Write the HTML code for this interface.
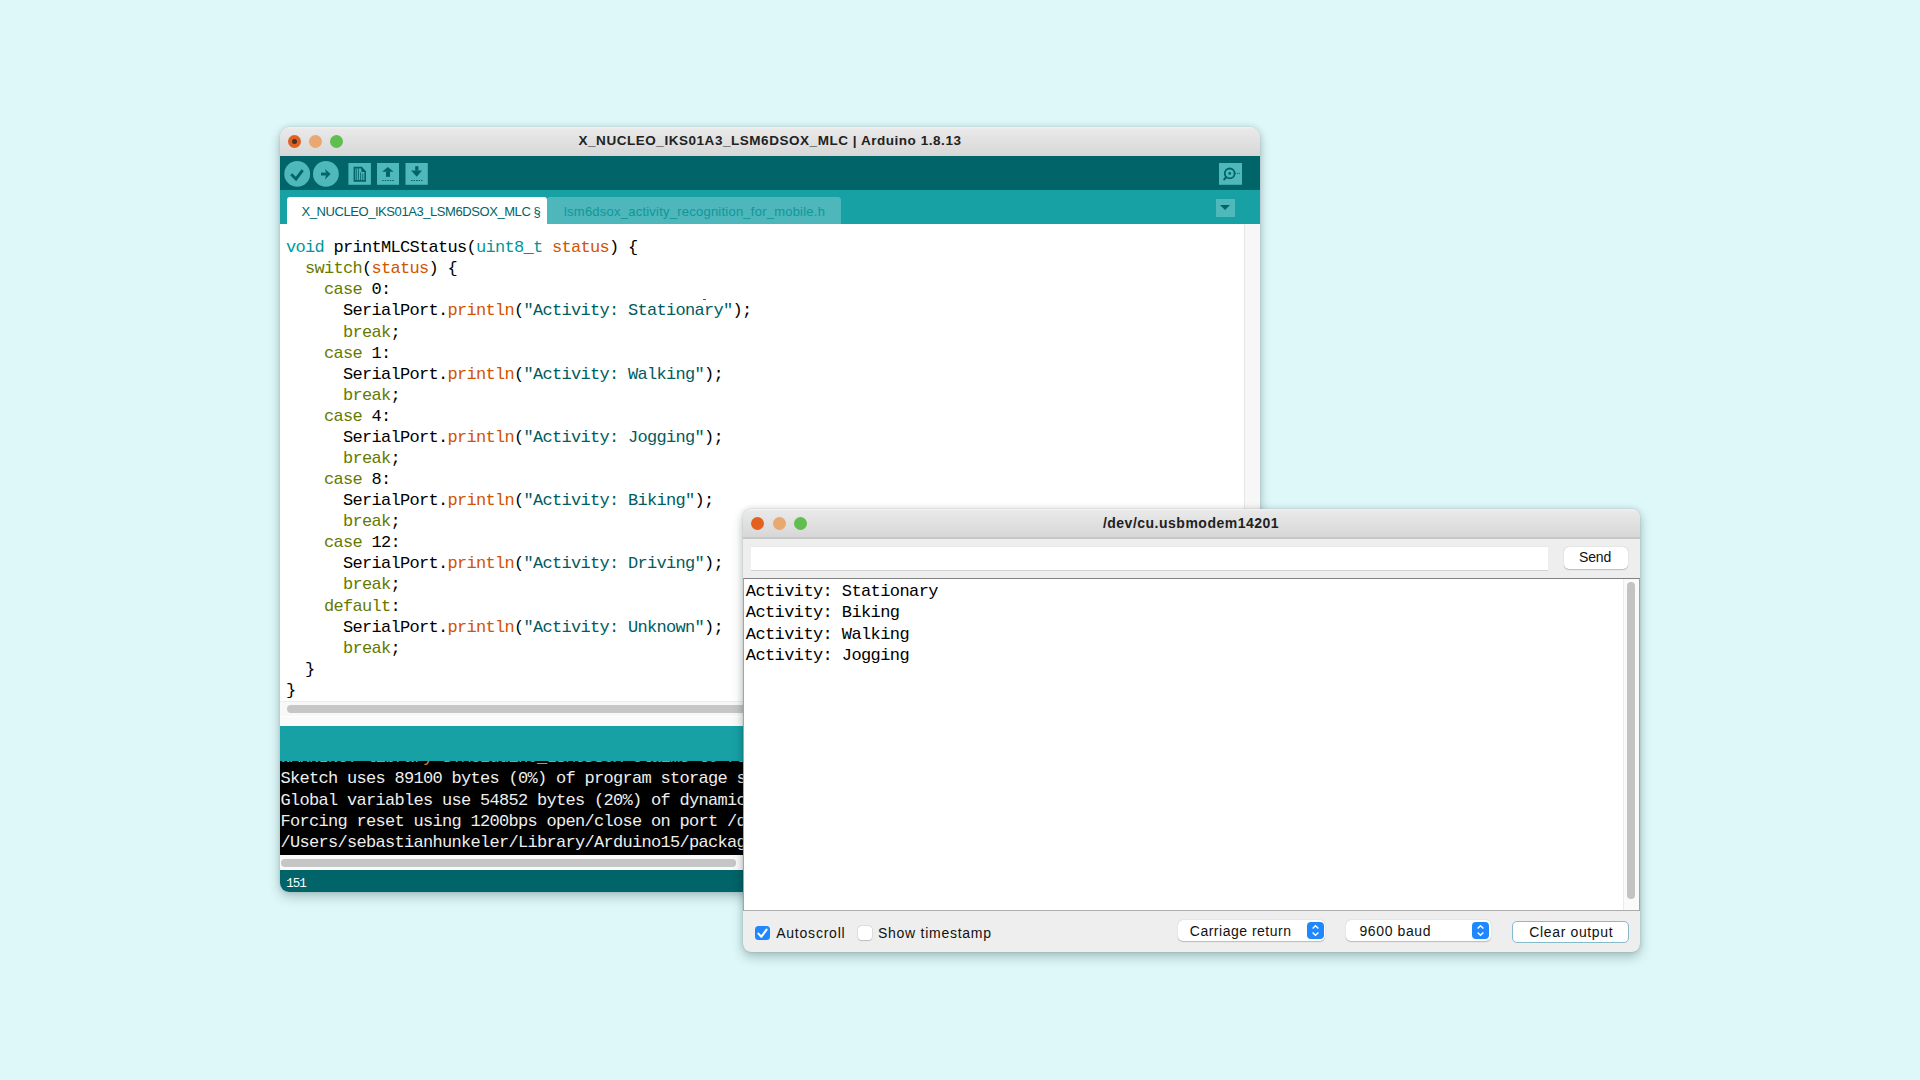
<!DOCTYPE html>
<html><head><meta charset="utf-8">
<style>
*{margin:0;padding:0;box-sizing:border-box}
html,body{width:1920px;height:1080px;overflow:hidden;background:#def7f8;font-family:"Liberation Sans",sans-serif}
.abs{position:absolute}
#ard{position:absolute;left:280px;top:127px;width:980px;height:765px;border-radius:10px 10px 9px 9px;overflow:hidden;background:#fff;box-shadow:0 5px 12px rgba(0,35,35,0.22),0 0 6px rgba(0,30,30,0.12),0 0 1px rgba(0,0,0,0.25)}
.tbar{position:absolute;left:0;top:0;right:0;background:linear-gradient(#f2f2f2 0,#e9e9e9 2px,#d7d7d7 100%)}
.title{position:absolute;left:0;right:0;text-align:center;font-weight:bold;font-size:13px;color:#222;white-space:nowrap}
.tl{position:absolute;width:13px;height:13px;border-radius:50%}
.mono{font-family:"Liberation Mono",monospace;white-space:pre}
#code{position:absolute;left:6px;top:13.2px;font-size:17px;letter-spacing:-0.7px;line-height:21.08px;color:#000}
.k1{color:#00979c}.k2{color:#667a00}.fn{color:#d35400}.st{color:#005c5f}
#ser{position:absolute;left:743px;top:509px;width:897px;height:443px;border-radius:8px;overflow:hidden;background:#eeeeee;box-shadow:0 5px 12px rgba(0,35,35,0.24),0 0 6px rgba(0,30,30,0.13),0 0 1px rgba(0,0,0,0.3)}
.btn{position:absolute;background:#fff;border-radius:5px;box-shadow:0 0.5px 1.2px rgba(0,0,0,0.22),0 0 0.5px rgba(0,0,0,0.12);font-size:14px;color:#111}
</style></head>
<body>
<domain style="display:none">Computer-Use</domain>
<div id="ard">
  <div class="tbar" style="height:29px">
    <div class="tl" style="left:8.3px;top:8px;background:#e2611f"><div class="abs" style="left:4px;top:4px;width:5px;height:5px;border-radius:50%;background:#4a3028"></div></div>
    <div class="tl" style="left:29px;top:8px;background:#e9a772"></div>
    <div class="tl" style="left:50px;top:8px;background:#5ebf4f"></div>
    <div id="t_title1" class="title" style="letter-spacing:0.54px;font-size:13.5px;top:7px;line-height:13px"><span>X_NUCLEO_IKS01A3_LSM6DSOX_MLC | Arduino 1.8.13</span></div>
  </div>
  <div class="abs" style="left:0;top:29px;width:980px;height:34px;background:#006468"></div>
  <div class="abs" style="left:0;top:63px;width:980px;height:34px;background:#17a1a5"></div>
  <div class="abs" style="left:7px;top:70px;width:260px;height:27px;background:#fff;border-radius:3px 3px 0 0"></div>
  <div class="abs" style="left:267px;top:70px;width:294px;height:27px;background:#4db7bb;border-radius:3px 3px 0 0"></div>
  
  <svg class="abs" style="left:0;top:29px" width="980" height="34" viewBox="0 29 980 34">
    <circle cx="17.2" cy="46.9" r="12.9" fill="#4fb8bb"/>
    <polyline points="11.2,47.3 16,52 22.7,43.2" fill="none" stroke="#006468" stroke-width="2.9"/>
    <circle cx="45.9" cy="46.9" r="12.9" fill="#4fb8bb"/>
    <rect x="41" y="45.6" width="5" height="2.9" fill="#006468"/>
    <polygon points="45,42 50.6,47.1 45,52.6 46.3,47.1" fill="#006468"/>
    <rect x="68.4" y="36" width="22.5" height="21.8" fill="#4fb8bb"/>
    <path d="M74.4,40.6 H81.5 L85.2,44.6 V53.9 H74.4 Z" fill="none" stroke="#006468" stroke-width="1.6"/>
    <path d="M81.3,40.3 L85.6,44.9 H81.3 Z" fill="#006468"/>
    <line x1="76.3" y1="41.5" x2="76.3" y2="53" stroke="#006468" stroke-width="0.9"/>
    <line x1="78.4" y1="41.5" x2="78.4" y2="53" stroke="#006468" stroke-width="0.9"/>
    <line x1="80.6" y1="45.5" x2="80.6" y2="53" stroke="#006468" stroke-width="0.9"/>
    <line x1="82.8" y1="46.5" x2="82.8" y2="53" stroke="#006468" stroke-width="0.9"/>
    <rect x="97" y="36" width="22" height="21.8" fill="#4fb8bb"/>
    <polygon points="107.8,40 113.6,44.8 102.2,44.8" fill="#006468"/>
    <rect x="106" y="44.5" width="4" height="5.3" fill="#006468"/>
    <line x1="102.2" y1="53.5" x2="114" y2="53.5" stroke="#006468" stroke-width="1" stroke-dasharray="1.5 1"/>
    <rect x="125.5" y="36" width="22.3" height="21.8" fill="#4fb8bb"/>
    <rect x="135.2" y="39.2" width="3.2" height="4.4" fill="#006468"/>
    <polygon points="131,43.4 142,43.4 136.8,49.8" fill="#006468"/>
    <line x1="131" y1="53.5" x2="143" y2="53.5" stroke="#006468" stroke-width="1" stroke-dasharray="1.5 1"/>
    <rect x="939" y="36" width="23" height="21.8" fill="#4fb8bb"/>
    <circle cx="949.7" cy="46.4" r="4.9" fill="none" stroke="#006468" stroke-width="1.8"/>
    <circle cx="949.7" cy="46.4" r="1.3" fill="#006468"/>
    <line x1="946.2" y1="50" x2="944.3" y2="52.4" stroke="#006468" stroke-width="2.2" stroke-linecap="round"/>
    <line x1="954.8" y1="46.4" x2="960" y2="46.4" stroke="#006468" stroke-width="0.9" stroke-dasharray="1.2 0.8"/>
  </svg>
  <div class="abs" style="left:936px;top:72px;width:19px;height:17.7px;background:#4fb8bb"></div>
  <div class="abs" style="left:940.3px;top:77.8px;width:0;height:0;border-left:5.2px solid transparent;border-right:5.2px solid transparent;border-top:5.6px solid #006468"></div>
  <div id="t_tab1" class="abs" style="letter-spacing:-0.43px;left:21.5px;top:77.5px;font-size:13px;line-height:13px;color:#006468;white-space:nowrap">X_NUCLEO_IKS01A3_LSM6DSOX_MLC §</div>
  <div id="t_tab2" class="abs" style="letter-spacing:0.23px;left:284px;top:77.5px;font-size:13px;line-height:13px;color:#12969a;white-space:nowrap">lsm6dsox_activity_recognition_for_mobile.h</div>
  <div id="editor" class="abs" style="left:0;top:97px;width:980px;height:502px;background:#fff">
    <div class="abs" style="left:964px;top:0;width:16px;height:502px;background:#f7f7f7;border-left:1px solid #e6e6e6"></div>
    <div class="abs" style="left:0;top:476.8px;width:964px;height:15.7px;background:#f8f8f8;border-top:1px solid #ececec">
      <div class="abs" style="left:7.4px;top:3.4px;width:900px;height:8.2px;background:#c6c6c6;border-radius:4.1px"></div>
    </div>
    <div class="abs" style="left:0;top:492.5px;width:980px;height:9.5px;background:#fafafa"></div>
    <div class="abs" style="left:423.3px;top:74.8px;width:2.5px;height:1px;background:#555"></div>
    <div id="code" class="mono"><span class="k1">void</span> printMLCStatus(<span class="k1">uint8_t</span> <span class="fn">status</span>) {
  <span class="k2">switch</span>(<span class="fn">status</span>) {
    <span class="k2">case</span> 0:
      SerialPort.<span class="fn">println</span>(<span class="st">"Activity: Stationary"</span>);
      <span class="k2">break</span>;
    <span class="k2">case</span> 1:
      SerialPort.<span class="fn">println</span>(<span class="st">"Activity: Walking"</span>);
      <span class="k2">break</span>;
    <span class="k2">case</span> 4:
      SerialPort.<span class="fn">println</span>(<span class="st">"Activity: Jogging"</span>);
      <span class="k2">break</span>;
    <span class="k2">case</span> 8:
      SerialPort.<span class="fn">println</span>(<span class="st">"Activity: Biking"</span>);
      <span class="k2">break</span>;
    <span class="k2">case</span> 12:
      SerialPort.<span class="fn">println</span>(<span class="st">"Activity: Driving"</span>);
      <span class="k2">break</span>;
    <span class="k2">default</span>:
      SerialPort.<span class="fn">println</span>(<span class="st">"Activity: Unknown"</span>);
      <span class="k2">break</span>;
  }
}</div>
  </div>
  <div class="abs" style="left:0;top:599px;width:980px;height:35px;background:#17a1a5"></div>
  <div class="abs" style="left:0;top:634px;width:980px;height:93.5px;background:#000;overflow:hidden">
    <div class="mono abs" style="left:0.5px;top:-13.6px;font-size:17px;letter-spacing:-0.7px;line-height:21.08px;color:#eeeeee"><span style="color:#e8802c">WARNING: library STM32duino_LSM6DSOX claims to run on stm32 architecture(s)</span>
Sketch uses 89100 bytes (0%) of program storage space. Maximum is 1048576 bytes.
Global variables use 54852 bytes (20%) of dynamic memory.
Forcing reset using 1200bps open/close on port /dev/cu.usbmodem14201
/Users/sebastianhunkeler/Library/Arduino15/packages/arduino/tools</div>
  </div>
  <div class="abs" style="left:0;top:727.5px;width:980px;height:15.7px;background:#fafafa">
    <div class="abs" style="left:1px;top:4.4px;width:455px;height:8.3px;background:#c6c6c6;border-radius:4.2px"></div>
  </div>
  <div class="abs" style="left:0;top:743.2px;width:980px;height:22px;background:#006468">
    <div class="mono abs" style="left:6.3px;top:7.6px;font-size:12.5px;letter-spacing:-1px;line-height:12.5px;color:#fff">151</div>
  </div>
</div>

<div id="ser">
  <div class="tbar" style="height:29.8px;border-bottom:2px solid #c6c6c6">
    <div class="tl" style="left:8.2px;top:8.2px;background:#e2611f"></div>
    <div class="tl" style="left:29.9px;top:8.2px;background:#e9a772"></div>
    <div class="tl" style="left:51.1px;top:8.2px;background:#5ebf4f"></div>
    <div class="title" style="top:7.7px;left:-1px;line-height:13px;font-size:14px"><span id="t_title2" style="letter-spacing:0.5px">/dev/cu.usbmodem14201</span></div>
  </div>
  <div class="abs" style="left:7.8px;top:38px;width:797.2px;height:23.3px;background:#fff;box-shadow:0 1px 0 #d2d2d2, 0 -0.5px 0 #e4e4e4"></div>
  <div class="btn" style="left:820.8px;top:38px;width:64.6px;height:22.3px"><span id="t_send" class="abs" style="left:15.3px;top:3.2px;line-height:14px;letter-spacing:-0.2px">Send</span></div>
  <div class="abs" style="left:0.3px;top:69px;width:896.4px;height:333.4px;background:#fff;border-top:1px solid #808080;border-left:1px solid #a4a4a4;border-right:1px solid #a4a4a4;border-bottom:1.5px solid #acacac">
    <div class="abs" style="left:878.5px;top:0;width:16.4px;height:330.9px;background:#fafafa;border-left:1px solid #ececec"></div>
    <div class="abs" style="left:882.3px;top:3px;width:8.8px;height:317.4px;background:#c3c3c3;border-radius:4.4px"></div>
    <div id="sertext" class="mono abs" style="left:1.5px;top:2.2px;font-size:17px;letter-spacing:-0.6px;line-height:21.3px;color:#000">Activity: Stationary
Activity: Biking
Activity: Walking
Activity: Jogging</div>
  </div>
  <div class="abs" style="left:12px;top:416.7px;width:14.8px;height:14.8px;background:#2088ff;border-radius:3.5px">
    <svg class="abs" style="left:0;top:0" width="15" height="15" viewBox="0 0 15 15"><polyline points="3.4,7.6 6.3,10.8 11.6,3.6" fill="none" stroke="#fff" stroke-width="2.1" stroke-linecap="round" stroke-linejoin="round"/></svg>
  </div>
  <span id="t_auto" class="abs" style="letter-spacing:0.78px;left:33.2px;top:417px;font-size:14px;line-height:14px;color:#111;white-space:nowrap">Autoscroll</span>
  <div class="abs" style="left:115.1px;top:416.6px;width:14.4px;height:14.4px;background:#fff;border-radius:3.5px;box-shadow:0 0 0 0.5px rgba(0,0,0,0.12),0 0.5px 1px rgba(0,0,0,0.15)"></div>
  <span id="t_ts" class="abs" style="letter-spacing:0.74px;left:134.9px;top:417px;font-size:14px;line-height:14px;color:#111;white-space:nowrap">Show timestamp</span>
  <div class="btn" style="left:435px;top:411.3px;width:146.6px;height:20.8px">
    <span id="t_cr" class="abs" style="letter-spacing:0.5px;left:11.8px;top:3.5px;line-height:14px;white-space:nowrap">Carriage return</span>
    <div class="abs" style="left:128.6px;top:1.7px;width:17.1px;height:17.2px;background:#2088ff;border-radius:4px">
      <svg class="abs" style="left:0;top:0" width="17" height="17" viewBox="0 0 17 17"><polyline points="5.6,6.6 8.5,3.8 11.4,6.6" fill="none" stroke="#fff" stroke-width="1.4"/><polyline points="5.6,10.4 8.5,13.2 11.4,10.4" fill="none" stroke="#fff" stroke-width="1.4"/></svg>
    </div>
  </div>
  <div class="btn" style="left:602.9px;top:411.2px;width:144.9px;height:21px">
    <span id="t_baud" class="abs" style="letter-spacing:0.6px;left:13.6px;top:3.5px;line-height:14px;white-space:nowrap">9600 baud</span>
    <div class="abs" style="left:125.7px;top:1.8px;width:17.1px;height:17.2px;background:#2088ff;border-radius:4px">
      <svg class="abs" style="left:0;top:0" width="17" height="17" viewBox="0 0 17 17"><polyline points="5.6,6.6 8.5,3.8 11.4,6.6" fill="none" stroke="#fff" stroke-width="1.4"/><polyline points="5.6,10.4 8.5,13.2 11.4,10.4" fill="none" stroke="#fff" stroke-width="1.4"/></svg>
    </div>
  </div>
  <div class="btn" style="left:769.3px;top:411.6px;width:116.3px;height:22.4px;box-shadow:none;border:1.3px solid #86b9cc">
    <span id="t_clear" class="abs" style="letter-spacing:0.64px;left:16px;top:3.2px;line-height:14px;white-space:nowrap">Clear output</span>
  </div>
</div>
</body></html>
